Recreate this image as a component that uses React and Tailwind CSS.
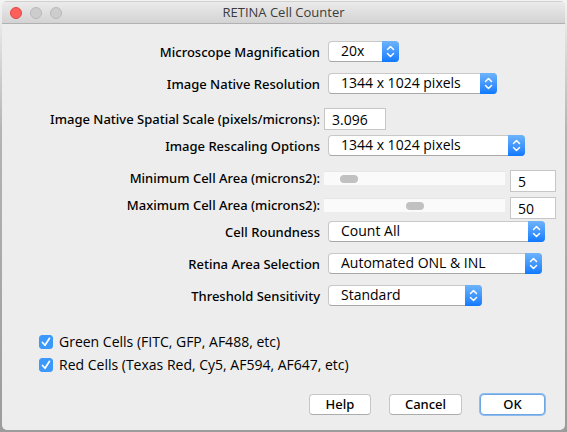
import { useState } from "react";

function Row({ id, label, leading = "leading-[22px]", className = "", children }) {
  return (
    <div className={`flex items-start ${className}`}>
      <label htmlFor={id} className={`-mb-px w-[318px] shrink-0 text-right ${leading}`}>
        {label}
      </label>
      {children}
    </div>
  );
}

function Popup({ id, width, options }) {
  return (
    <div className={`relative ml-2 h-[21px] ${width}`}>
      <select
        id={id}
        className="h-full w-full appearance-none rounded-[4px] border border-[#c8c8c8] border-b-[#a8a8a8] bg-white pr-5 pb-px pl-3 font-['Open_Sans','Noto_Sans',sans-serif] text-[14px] leading-[18px] outline-none"
      >
        {options.map((option) => (
          <option key={option}>{option}</option>
        ))}
      </select>
      <span className="pointer-events-none absolute inset-y-0 right-0 flex w-[17px] items-center justify-center rounded-r-[4px] bg-linear-to-b from-[#6cb3fa] to-[#0a7aff]">
        <svg width="9" height="13" viewBox="0 0 9 13" fill="none" stroke="white" strokeWidth="1.5" strokeLinecap="round" strokeLinejoin="round" aria-hidden="true">
          <path d="M1.5 4.5 4.5 1.5l3 3M1.5 8.5l3 3 3-3" />
        </svg>
      </span>
    </div>
  );
}

function TextBox({ id, width, ...rest }) {
  return (
    <input
      id={id}
      type="text"
      className={`h-[22px] shrink-0 border border-[#c6c6c6] bg-white px-[7px] font-['Open_Sans','Noto_Sans',sans-serif] text-[14px] outline-none ${width}`}
      {...rest}
    />
  );
}

function SliderRow({ id, label, initial, max, className }) {
  const [value, setValue] = useState(initial);
  return (
    <Row id={id} label={label} leading="leading-[17px]" className={className}>
      <input
        id={id}
        type="range"
        min="0"
        max={max}
        value={value}
        onChange={(event) => setValue(event.target.value)}
        className="mt-px ml-1 h-[14px] min-w-0 flex-1 appearance-none border-t border-[#e6e6e6] bg-[#fafafa] outline-none [&::-webkit-slider-thumb]:h-2 [&::-webkit-slider-thumb]:w-[18px] [&::-webkit-slider-thumb]:appearance-none [&::-webkit-slider-thumb]:rounded-full [&::-webkit-slider-thumb]:bg-[#c1c1c1]"
      />
      <div className="mr-[9px] ml-[5px] flex">
        <TextBox
          id={`${id}-value`}
          width="w-[46px]"
          aria-label={label}
          value={value}
          onChange={(event) => setValue(event.target.value)}
        />
      </div>
    </Row>
  );
}

function Check({ id, label }) {
  return (
    <div className="flex h-[23px] items-center">
      <span className="relative flex size-[14px]">
        <input
          id={id}
          type="checkbox"
          defaultChecked
          className="peer size-[14px] appearance-none rounded-[3px] border border-[#b4b4b4] bg-white checked:border-[#3b99fc] checked:bg-[#3b99fc]"
        />
        <svg className="pointer-events-none absolute inset-0 hidden peer-checked:block" width="14" height="14" viewBox="0 0 14 14" fill="none" stroke="white" strokeWidth="1.7" strokeLinecap="round" strokeLinejoin="round" aria-hidden="true">
          <path d="M3.5 7.5 6 10.3l4.5-7" />
        </svg>
      </span>
      <label htmlFor={id} className="ml-[6px] font-['Open_Sans','Noto_Sans',sans-serif] text-[14px]">{label}</label>
    </div>
  );
}

const plainButton =
  "h-[21px] rounded-[4px] border border-[#c6c6c6] border-b-[#acacac] bg-white pb-px leading-[18px]";

export default function App() {
  return (
    <div className="min-h-screen bg-linear-to-b from-[#f4f4f4] via-[#b4b4b4] via-30% to-[#9c9c9c] px-[2px] pt-px pb-[2px] font-['Noto_Sans','Open_Sans',sans-serif] text-[13px] font-medium text-black">
      <div className="flex min-h-[429px] flex-col overflow-hidden rounded-[5px] bg-[#ededed]">
        <header className="grid h-[23px] grid-cols-[60px_1fr_60px] items-center border-t border-b border-t-[#d0d0d0] border-b-[#b1b1b1] bg-linear-to-b from-[#ebebeb] to-[#d3d3d3]">
          <div className="flex gap-2 pl-2">
            <button aria-label="Close" className="size-3 rounded-full border border-[#e2463f] bg-[#fc605b]" />
            <button aria-label="Minimize" className="size-3 rounded-full border border-[#b9b9b9] bg-[#cdcdcd]" />
            <button aria-label="Zoom" className="size-3 rounded-full border border-[#b9b9b9] bg-[#cdcdcd]" />
          </div>
          <h1 className="text-center font-['Open_Sans','Noto_Sans',sans-serif] font-normal text-[#3c3c3c]">RETINA Cell Counter</h1>
        </header>

        <form className="flex flex-1 flex-col" onSubmit={(event) => event.preventDefault()}>
          <Row id="magnification" label="Microscope Magnification" className="mt-[17px]">
            <Popup id="magnification" width="w-[71px]" options={["20x"]} />
          </Row>
          <Row id="resolution" label="Image Native Resolution" className="mt-[11px]">
            <Popup id="resolution" width="w-[169px]" options={["1344 x 1024 pixels"]} />
          </Row>
          <Row id="scale" label="Image Native Spatial Scale (pixels/microns):" className="mt-[14px]">
            <div className="ml-1 flex">
              <TextBox id="scale" width="w-[62px]" defaultValue="3.096" />
            </div>
          </Row>
          <Row id="rescaling" label="Image Rescaling Options" className="mt-[5px]">
            <Popup id="rescaling" width="w-[197px]" options={["1344 x 1024 pixels"]} />
          </Row>
          <SliderRow id="minimum" label="Minimum Cell Area (microns2):" initial={5} max={50} className="mt-[14px]" />
          <SliderRow id="maximum" label="Maximum Cell Area (microns2):" initial={50} max={100} className="mt-[5px]" />
          <Row id="roundness" label="Cell Roundness" className="mt-[2px]">
            <Popup id="roundness" width="w-[217px]" options={["Count All"]} />
          </Row>
          <Row id="retina" label="Retina Area Selection" className="mt-[11px]">
            <Popup id="retina" width="w-[214px]" options={["Automated ONL & INL"]} />
          </Row>
          <Row id="threshold" label="Threshold Sensitivity" className="mt-[11px]">
            <Popup id="threshold" width="w-[154px]" options={["Standard"]} />
          </Row>

          <div className="mt-6 pl-[37px]">
            <Check id="green" label="Green Cells (FITC, GFP, AF488, etc)" />
            <Check id="red" label="Red Cells (Texas Red, Cy5, AF594, AF647, etc)" />
          </div>

          <div className="mt-auto mr-5 mb-[15px] flex justify-end gap-[18px]">
            <button type="button" className={`${plainButton} w-[62px]`}>Help</button>
            <button type="button" className={`${plainButton} w-[73px]`}>Cancel</button>
            <button type="submit" className="h-[21px] w-[65px] rounded-[4px] border border-[#6ea6e4] bg-white pb-px leading-[18px] ring-1 ring-[#8fbcee]">OK</button>
          </div>
        </form>
      </div>
    </div>
  );
}
